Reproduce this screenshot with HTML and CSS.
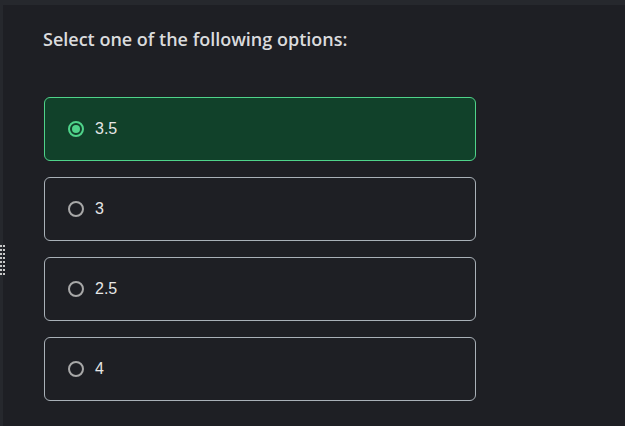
FILE: index.html
```html
<!DOCTYPE html>
<html>
<head>
<meta charset="utf-8">
<link rel="stylesheet" href="styles.css">
</head>
<body>
<div class="frame">
  <div class="topbar"></div>
  <div class="main">
    <div class="sidebar"><div class="handle"></div></div>
    <div class="content">
      <h2 class="title">Select one of the following options:</h2>
      <div class="options">
        <label class="option selected"><span class="radio"></span><span class="label">3.5</span></label>
        <label class="option"><span class="radio"></span><span class="label">3</span></label>
        <label class="option"><span class="radio"></span><span class="label">2.5</span></label>
        <label class="option"><span class="radio"></span><span class="label">4</span></label>
      </div>
    </div>
  </div>
</div>
</body>
</html>
```
FILE: styles.css
```css
html, body {
  margin: 0;
  padding: 0;
  background: #1e1f24;
  width: 625px;
  height: 426px;
  overflow: hidden;
}
.frame {
  display: flex;
  flex-direction: column;
  height: 426px;
}
.topbar {
  height: 5px;
  background: #26282d;
  flex: none;
}
.main {
  display: flex;
  flex: 1;
}
.sidebar {
  width: 3px;
  background: #26282d;
  flex: none;
  position: relative;
}
.handle {
  position: absolute;
  left: 0;
  top: 240px;
  width: 5px;
  height: 30px;
  background: repeating-linear-gradient(to bottom, #c8c8c8 0 2px, transparent 2px 4px);
  -webkit-mask: repeating-linear-gradient(to right, #000 0 2px, transparent 2px 3px);
  mask: repeating-linear-gradient(to right, #000 0 2px, transparent 2px 3px);
}
.content {
  flex: 1;
  padding: 0 0 0 40px;
}
.title {
  margin: 21px 0 0 0;
  font-family: "Open Sans", sans-serif;
  font-weight: 600;
  font-size: 18px;
  line-height: 26px;
  color: #dadbdd;
}
.options {
  margin-top: 45px;
  display: flex;
  flex-direction: column;
  gap: 16px;
  width: 432px;
  margin-left: 1px;
}
.option {
  display: flex;
  align-items: center;
  gap: 11px;
  height: 64px;
  box-sizing: border-box;
  border: 1px solid #a9b1b8;
  border-radius: 6px;
  padding-left: 23px;
  font-family: "Liberation Sans", Arial, sans-serif;
  font-size: 16px;
  color: #e6e6e6;
}
.option.selected {
  background: #11412a;
  border-color: #4fd38a;
}
.radio {
  width: 16px;
  height: 16px;
  box-sizing: border-box;
  border: 2px solid #a8a8a8;
  border-radius: 50%;
  display: flex;
  align-items: center;
  justify-content: center;
  flex: none;
}
.selected .radio {
  border-color: #4fd38a;
}
.selected .radio::after {
  content: "";
  width: 8px;
  height: 8px;
  border-radius: 50%;
  background: #4fd38a;
}
.label {
  line-height: 18px;
}
```
